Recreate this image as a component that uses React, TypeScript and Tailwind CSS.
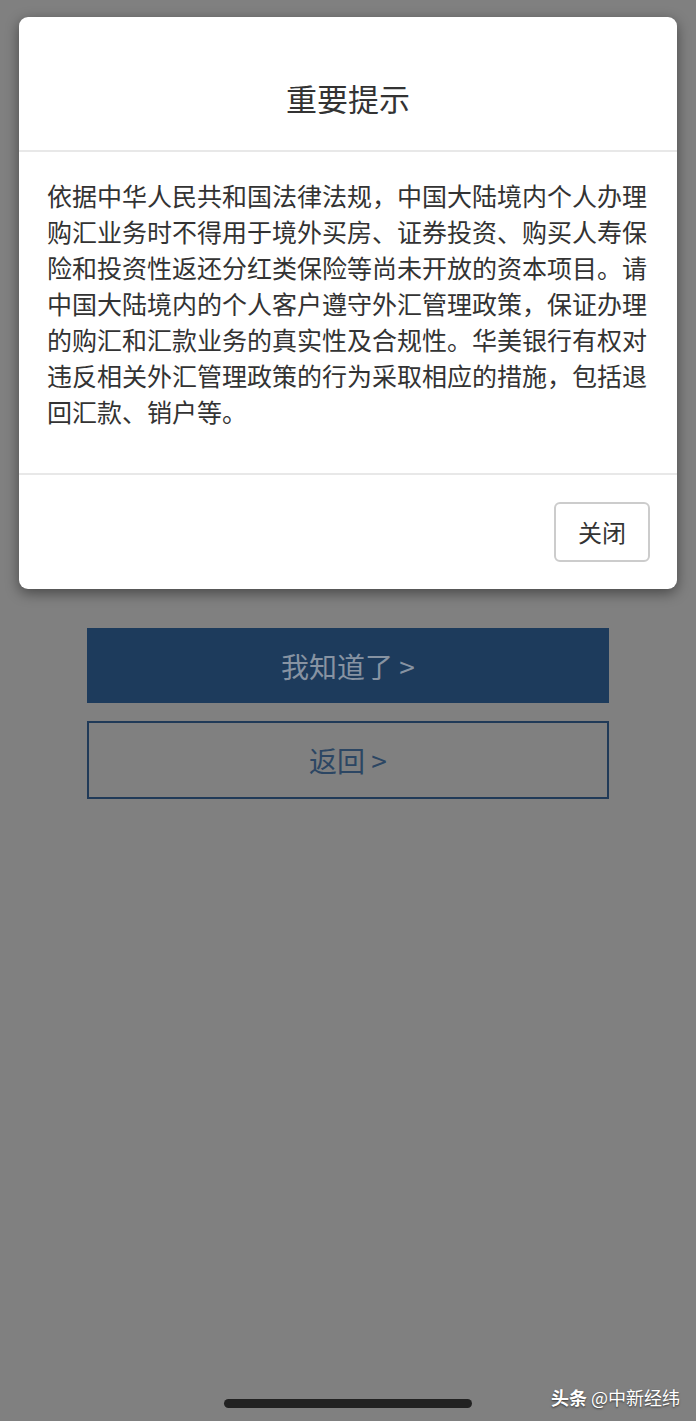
import React from 'react';

const noticeLines = [
  '依据中华人民共和国法律法规，中国大陆境内个人办理',
  '购汇业务时不得用于境外买房、证券投资、购买人寿保',
  '险和投资性返还分红类保险等尚未开放的资本项目。请',
  '中国大陆境内的个人客户遵守外汇管理政策，保证办理',
  '的购汇和汇款业务的真实性及合规性。华美银行有权对',
  '违反相关外汇管理政策的行为采取相应的措施，包括退',
  '回汇款、销户等。',
];

const App: React.FC = () => {
  return (
    <div
      className="relative flex h-[1421px] w-[696px] flex-col bg-[#808080]"
      style={{ fontFamily: '"Noto Sans CJK SC", "Noto Sans", sans-serif' }}>
      {/* modal */}
      <div className="mx-[19px] mt-[17px] rounded-[9px] bg-white shadow-[0_4px_14px_rgba(0,0,0,0.45)]">
        <div className="border-b-2 border-[#e8e8e8] pt-[65px] pb-[37px] text-center">
          <h1 className="text-[31px] leading-[31px] text-[#333]">重要提示</h1>
        </div>
        <div className="border-b-2 border-[#e8e8e8] px-[28px] pt-[25px] pb-[44px]">
          <p className="text-[25px] leading-[36px] text-[#333]">
            {noticeLines.map((line) => (
              <span key={line} className="block whitespace-nowrap">
                {line}
              </span>
            ))}
          </p>
        </div>
        <div className="flex justify-end px-[27px] pt-[27px] pb-[27px]">
          <button className="h-[60px] w-[96px] rounded-[6px] border-2 border-[#cccccc] bg-white text-[24px] text-[#333]">
            关闭
          </button>
        </div>
      </div>

      {/* dimmed page underneath */}
      <div className="mx-[87px] mt-[39px] flex flex-col gap-[18px]">
        <button className="flex h-[75px] items-center justify-center bg-[#1d3b5c] text-[28px] text-[#8793a2]">
          我知道了 &gt;
        </button>
        <button className="flex h-[78px] items-center justify-center border-2 border-[#203a58] text-[28px] text-[#2c4663]">
          返回 &gt;
        </button>
      </div>

      <div className="mt-auto flex justify-center pb-[13px]">
        <div className="h-[9px] w-[248px] rounded-full bg-[#222]" />
      </div>

      <div className="absolute right-[16px] bottom-[15px] text-[18px] leading-none text-white [text-shadow:0_1px_2px_rgba(0,0,0,0.6)]">
        <span className="font-bold">头条</span> @中新经纬
      </div>
    </div>
  );
};

export default App;
